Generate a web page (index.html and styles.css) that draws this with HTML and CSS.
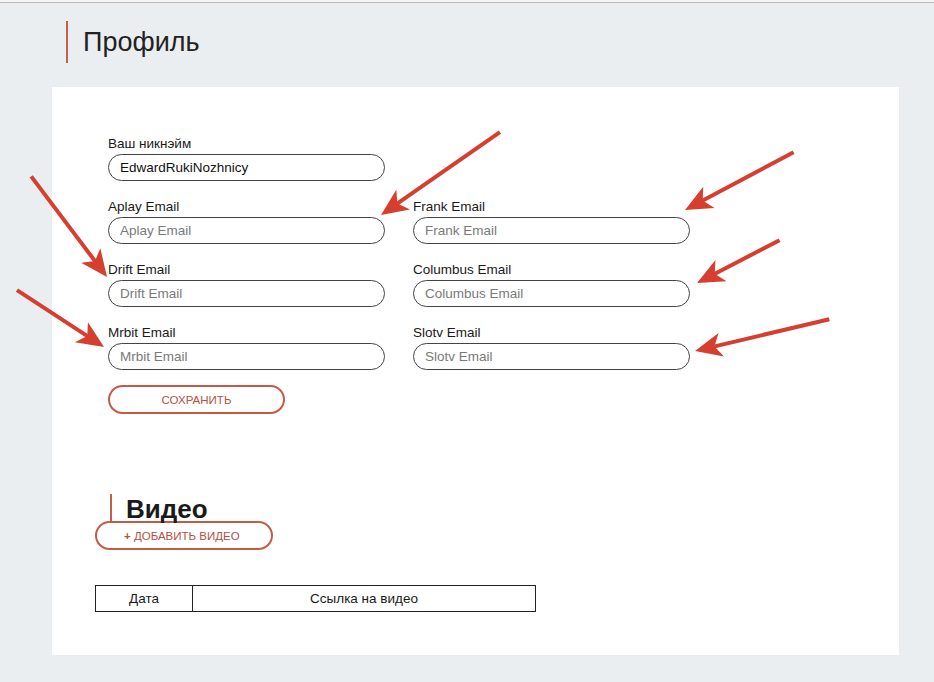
FILE: index.html
```html
<!DOCTYPE html>
<html lang="ru">
<head>
    <meta charset="UTF-8">
    <title>Профиль</title>
    <link rel="stylesheet" href="styles.css">
</head>
<body>
    <div class="topline"></div>

    <div class="page-title">
        <h1>Профиль</h1>
    </div>

    <div class="card">
        <form class="profile-form">
            <div class="field">
                <label>Ваш никнэйм</label>
                <input type="text" value="EdwardRukiNozhnicy">
            </div>
            <div class="field"></div>

            <div class="field">
                <label>Aplay Email</label>
                <input type="text" placeholder="Aplay Email">
            </div>
            <div class="field">
                <label>Frank Email</label>
                <input type="text" placeholder="Frank Email">
            </div>

            <div class="field">
                <label>Drift Email</label>
                <input type="text" placeholder="Drift Email">
            </div>
            <div class="field">
                <label>Columbus Email</label>
                <input type="text" placeholder="Columbus Email">
            </div>

            <div class="field">
                <label>Mrbit Email</label>
                <input type="text" placeholder="Mrbit Email">
            </div>
            <div class="field">
                <label>Slotv Email</label>
                <input type="text" placeholder="Slotv Email">
            </div>
        </form>
        <button class="btn btn-save">СОХРАНИТЬ</button>

        <div class="video">
            <h2>Видео</h2>
            <button class="btn btn-add"><span class="plus">+</span> ДОБАВИТЬ ВИДЕО</button>

            <table class="video-table">
                <tr>
                    <td class="col-date">Дата</td>
                    <td>Ссылка на видео</td>
                </tr>
            </table>
        </div>
    </div>

    <!-- стрелки поверх скриншота -->
    <svg class="arrows" width="934" height="682" viewBox="0 0 934 682">
        <g fill="#d63f30" stroke="#d63f30">
            <g transform="translate(381 215) rotate(145.1)">
                <line x1="-145" y1="0" x2="-18" y2="0" stroke-width="4"/>
                <polygon points="0,0 -27,-12 -20,0 -27,12" stroke="none"/>
            </g>
            <g transform="translate(685 210) rotate(152)">
                <line x1="-123" y1="0" x2="-18" y2="0" stroke-width="4"/>
                <polygon points="0,0 -27,-12 -20,0 -27,12" stroke="none"/>
            </g>
            <g transform="translate(107 277) rotate(53)">
                <line x1="-126" y1="0" x2="-18" y2="0" stroke-width="4"/>
                <polygon points="0,0 -27,-12 -20,0 -27,12" stroke="none"/>
            </g>
            <g transform="translate(697 283) rotate(152.6)">
                <line x1="-93" y1="0" x2="-18" y2="0" stroke-width="4"/>
                <polygon points="0,0 -27,-12 -20,0 -27,12" stroke="none"/>
            </g>
            <g transform="translate(104 347) rotate(33.2)">
                <line x1="-104" y1="0" x2="-18" y2="0" stroke-width="4"/>
                <polygon points="0,0 -27,-12 -20,0 -27,12" stroke="none"/>
            </g>
            <g transform="translate(695 351) rotate(166.7)">
                <line x1="-138" y1="0" x2="-18" y2="0" stroke-width="4"/>
                <polygon points="0,0 -27,-12 -20,0 -27,12" stroke="none"/>
            </g>
        </g>
    </svg>
</body>
</html>
```

FILE: styles.css
```css
body {
    margin: 0;
    background: #ebeef1;
    font-family: "Liberation Sans", Arial, sans-serif;
    color: #222;
    position: relative;
    min-height: 682px;
}

.topline {
    height: 2px;
    background: #f4f4f4;
    border-bottom: 1px solid #bdbdbd;
}

.page-title {
    padding: 18px 0 0 66px;
    height: 66px;
    box-sizing: border-box;
}

.page-title h1 {
    margin: 0;
    height: 42px;
    line-height: 42px;
    padding-left: 15px;
    border-left: 2px solid #c0614f;
    font-size: 27px;
    font-weight: normal;
    color: #222;
}

.card {
    margin: 18px 0 0 52px;
    width: 847px;
    height: 568px;
    box-sizing: border-box;
    background: #fff;
    padding: 49px 0 0 56px;
}

.profile-form {
    display: grid;
    grid-template-columns: 277px 277px;
    column-gap: 28px;
    row-gap: 18px;
}

.field label {
    display: block;
    font-size: 13.5px;
    line-height: 16px;
    height: 16px;
    margin-bottom: 2px;
    color: #1a1a1a;
}

.field input {
    display: block;
    width: 100%;
    height: 27px;
    box-sizing: border-box;
    border: 1px solid #444;
    border-radius: 14px;
    padding: 0 11px;
    font-family: "Liberation Sans", Arial, sans-serif;
    font-size: 13.5px;
    color: #111;
    background: #fff;
    outline: none;
}

.field input::placeholder {
    color: #7a7a7a;
}

.btn {
    display: block;
    height: 29px;
    box-sizing: border-box;
    border: 2px solid #c65a48;
    border-radius: 15px;
    background: #fff;
    color: #b8503f;
    font-family: "Liberation Sans", Arial, sans-serif;
    font-size: 11.5px;
    padding: 0;
    cursor: pointer;
}

.btn-save {
    width: 177px;
    margin-top: 15px;
}

.video {
    margin: 80px 0 0 -13px;
}

.video h2 {
    margin: 0 0 0 15px;
    height: 27px;
    line-height: 31px;
    padding-left: 14px;
    border-left: 2px solid #c0614f;
    font-size: 26px;
    font-weight: bold;
    color: #1a1a1a;
}

.btn-add {
    width: 178px;
    text-align: left;
    padding-left: 27px;
}

.btn-add .plus {
    font-weight: bold;
}

.video-table {
    margin-top: 35px;
    width: 441px;
    border-collapse: collapse;
    font-size: 13.5px;
}

.video-table td {
    border: 1px solid #222;
    height: 25px;
    padding: 0;
    text-align: center;
    color: #1a1a1a;
}

.video-table .col-date {
    width: 96px;
}

.arrows {
    position: absolute;
    top: 0;
    left: 0;
    pointer-events: none;
}
```
